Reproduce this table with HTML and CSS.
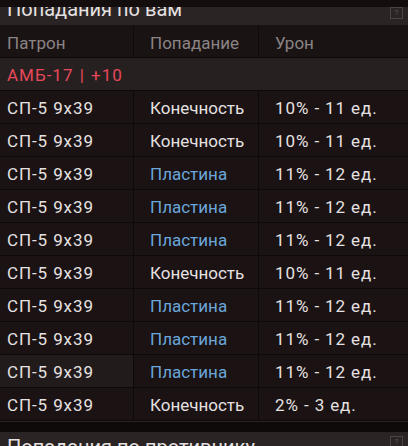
FILE: index.html
```html
<!DOCTYPE html>
<html>
<head>
<meta charset="utf-8">
<link rel="stylesheet" href="styles.css">
</head>
<body>
<div class="panel">
  <div class="strip"></div>
  <div class="title"><span class="title-text">Попадания по вам</span><span class="help">?</span></div>
  <div class="row head">
    <div class="cell">Патрон</div><div class="cell">Попадание</div><div class="cell">Урон</div>
  </div>
  <div class="weapon">АМБ-17 | +10</div>
  <div class="row"><div class="cell">СП-5 9x39</div><div class="cell">Конечность</div><div class="cell">10% - 11 ед.</div></div>
  <div class="row"><div class="cell">СП-5 9x39</div><div class="cell">Конечность</div><div class="cell">10% - 11 ед.</div></div>
  <div class="row"><div class="cell">СП-5 9x39</div><div class="cell plate">Пластина</div><div class="cell">11% - 12 ед.</div></div>
  <div class="row"><div class="cell">СП-5 9x39</div><div class="cell plate">Пластина</div><div class="cell">11% - 12 ед.</div></div>
  <div class="row"><div class="cell">СП-5 9x39</div><div class="cell plate">Пластина</div><div class="cell">11% - 12 ед.</div></div>
  <div class="row"><div class="cell">СП-5 9x39</div><div class="cell">Конечность</div><div class="cell">10% - 11 ед.</div></div>
  <div class="row"><div class="cell">СП-5 9x39</div><div class="cell plate">Пластина</div><div class="cell">11% - 12 ед.</div></div>
  <div class="row"><div class="cell">СП-5 9x39</div><div class="cell plate">Пластина</div><div class="cell">11% - 12 ед.</div></div>
  <div class="row"><div class="cell hl">СП-5 9x39</div><div class="cell plate">Пластина</div><div class="cell">11% - 12 ед.</div></div>
  <div class="row"><div class="cell">СП-5 9x39</div><div class="cell">Конечность</div><div class="cell">2% - 3 ед.</div></div>
  <div class="gap"></div>
  <div class="title bottom"><span class="title-text">Попадания по противнику</span><span class="help">?</span></div>
</div>
</body>
</html>
```
FILE: styles.css
```css
html, body { margin: 0; padding: 0; background: #140d0e; }
body { width: 408px; height: 446px; overflow: hidden; font-family: Roboto, "Liberation Sans", sans-serif; }
.panel { display: flex; flex-direction: column; }
.strip { height: 7px; background: #140d0e; }
.title {
  height: 18px; background: #2a2425; overflow: hidden;
  display: flex; justify-content: space-between; align-items: flex-start;
  border-bottom: 1px solid #1a1314;
  padding: 0 5px 0 7px;
}
.title-text { color: #e6e1e1; font-size: 20px; line-height: 22px; margin-top: -9px; white-space: nowrap; }
.help {
  width: 11px; height: 10px; border: 1px solid #4a4445; color: #5d5758;
  font-size: 8px; line-height: 10px; text-align: center; margin-top: 0;
}
.title.bottom { height: 14px; border-bottom: none; }
.title.bottom .title-text { margin-top: 4px; }
.title.bottom .help { margin-top: 4px; }
.row {
  display: grid; grid-template-columns: 134px 125px 149px;
  height: 33px; background: #1a1213; border-bottom: 1px solid #0f0a0a;
  box-sizing: border-box;
}
.cell {
  border-right: 1px solid #0f0a0a; color: #e6e1e1; font-size: 17px;
  display: flex; align-items: center; padding-left: 7px; padding-top: 2px;
  letter-spacing: 0.9px; white-space: nowrap;
}
.row .cell:nth-child(2) { padding-left: 16px; letter-spacing: 0; }
.row .cell:nth-child(3) { padding-left: 16px; border-right: none; }
.head { background: #1a1314; height: 32px; }
.head .cell { color: #8a8484; letter-spacing: 0; }
.weapon {
  height: 33px; background: #262021; color: #e8485a; font-size: 17px;
  display: flex; align-items: center; padding-left: 7px; padding-top: 1px;
  border-bottom: 1px solid #0f0a0a; box-sizing: border-box;
  letter-spacing: 1px; word-spacing: 1px;
}
.plate { color: #6aa6d9; }
.hl { background: #221b1c; }
.gap { height: 10px; background: #0f0a0a; border-top: 1px solid #2a2425; }
```
